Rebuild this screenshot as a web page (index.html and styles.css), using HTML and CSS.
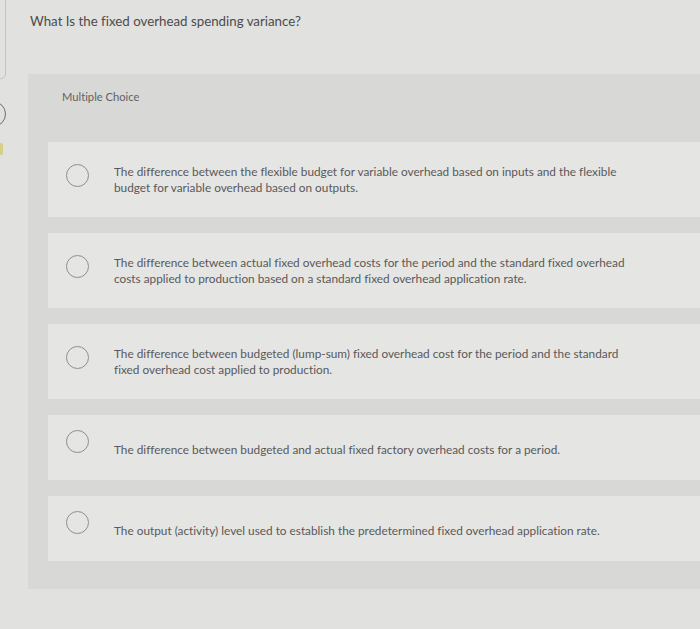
FILE: index.html
```html
<!DOCTYPE html>
<html lang="en">
<head>
<meta charset="utf-8">
<title>Fixed overhead spending variance</title>
<link rel="stylesheet" href="styles.css">
</head>
<body>
<div class="edge">
  <div class="edge-panel"></div>
  <div class="edge-ring"></div>
  <div class="edge-dot"></div>
</div>
<main class="page">
  <h1 class="question">What Is the fixed overhead spending variance?</h1>
  <section class="mc">
    <div class="mc-label">Multiple Choice</div>
    <ul class="options">
      <li class="option two"><span class="radio"></span><span class="text">The difference between the flexible budget for variable overhead based on inputs and the flexible budget for variable overhead based on outputs.</span></li>
      <li class="option two"><span class="radio"></span><span class="text">The difference between actual fixed overhead costs for the period and the standard fixed overhead costs applied to production based on a standard fixed overhead application rate.</span></li>
      <li class="option two"><span class="radio"></span><span class="text">The difference between budgeted (lump-sum) fixed overhead cost for the period and the standard fixed overhead cost applied to production.</span></li>
      <li class="option one"><span class="radio"></span><span class="text">The difference between budgeted and actual fixed factory overhead costs for a period.</span></li>
      <li class="option one"><span class="radio"></span><span class="text">The output (activity) level used to establish the predetermined fixed overhead application rate.</span></li>
    </ul>
  </section>
</main>
</body>
</html>
```
FILE: styles.css
```css
html, body {
  margin: 0;
  padding: 0;
}
body {
  background: #e1e1df;
  font-family: Lato, "Open Sans", "Liberation Sans", sans-serif;
  font-variant-ligatures: none;
  color: #555;
  height: 629px;
  overflow: hidden;
  position: relative;
}
.edge-panel {
  position: absolute;
  left: -10px;
  top: -10px;
  width: 14px;
  height: 87px;
  border: 1px solid #c4c4c2;
  border-radius: 0 0 5px 0;
}
.edge-ring {
  position: absolute;
  left: -20px;
  top: 101px;
  width: 24px;
  height: 24px;
  border: 1.5px solid #6e6e6e;
  border-radius: 50%;
}
.edge-dot {
  position: absolute;
  left: 0;
  top: 143px;
  width: 3px;
  height: 12px;
  background: #d6cf86;
  border-radius: 0 2px 2px 0;
}
.page {
  padding: 12px 0 0 28px;
}
.question {
  margin: 0 0 0 2px;
  font-size: 13.3px;
  font-weight: 400;
  line-height: 18px;
  color: #4c4c4c;
}
.mc {
  margin-top: 44px;
  background: #d8d8d6;
  padding: 16px 0 28px 20px;
}
.mc-label {
  padding-left: 14px;
  font-size: 11.2px;
  line-height: 14px;
  color: #626262;
}
.options {
  list-style: none;
  margin: 38px 0 0 0;
  padding: 0;
  display: flex;
  flex-direction: column;
  gap: 16px;
}
.option {
  background: #e5e5e3;
  display: flex;
  align-items: center;
  padding: 0 0 0 18px;
  gap: 25px;
}
.option.two { height: 75px; }
.option.one { height: 65px; }
.radio {
  flex: none;
  width: 21px;
  height: 21px;
  border: 1.5px solid #8b8e94;
  border-radius: 50%;
  margin-bottom: 8px;
}
.option.one .radio {
  margin-bottom: 12px;
}
.text {
  max-width: 530px;
  font-size: 11.8px;
  line-height: 16px;
  color: #595959;
}
.option.one .text {
  margin-top: 4px;
}
```
